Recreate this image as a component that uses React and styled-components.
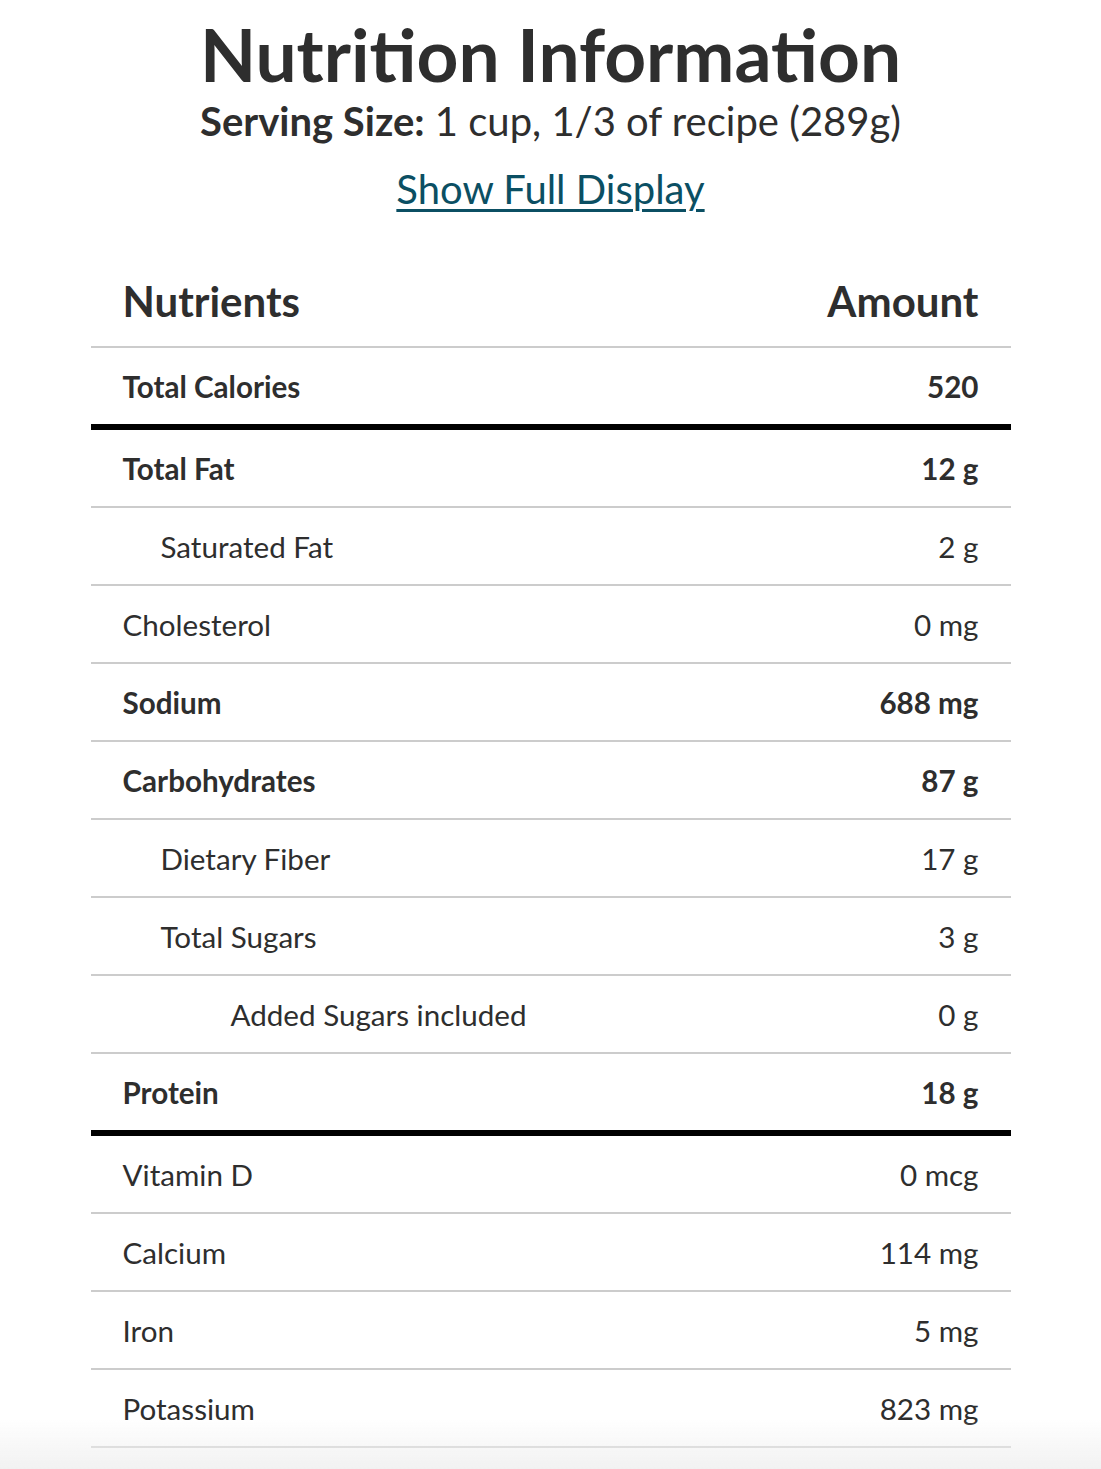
import React from 'react'
import styled, { createGlobalStyle } from 'styled-components'

const GlobalStyle = createGlobalStyle`
  body {
    margin: 0;
    background: #fff;
    font-family: Lato, "Noto Sans", sans-serif;
    color: #2e2e2e;
  }
`

const Page = styled.div`
  display: flex;
  flex-direction: column;
  align-items: center;
  padding-top: 18px;
`

const Title = styled.h1`
  margin: 0;
  font-size: 73px;
  line-height: 1;
  font-weight: 700;
  color: #2e2e2e;
`

const Serving = styled.p`
  margin: 6px 0 0;
  font-size: 40px;
  line-height: 1.2;
  font-weight: 400;

  strong {
    font-weight: 700;
  }
`

const FullLink = styled.a`
  margin-top: 20px;
  font-size: 40px;
  line-height: 1.2;
  color: #0b4f63;
  text-decoration: underline;
  text-decoration-thickness: 3px;
  text-underline-offset: 5px;
  cursor: pointer;
`

const Table = styled.div`
  width: 920px;
  margin-top: 63px;
  display: flex;
  flex-direction: column;
`

const HeadRow = styled.div`
  display: flex;
  justify-content: space-between;
  align-items: center;
  padding: 0 32px 20px;
  border-bottom: 2px solid #cccccc;
  font-size: 42px;
  font-weight: 700;
  line-height: 1.2;
`

const Row = styled.div`
  display: flex;
  justify-content: space-between;
  align-items: center;
  height: 76px;
  padding: 0 32px 0 ${p => 32 + p.$indent}px;
  border-bottom: ${p => (p.$heavy ? '6px solid #000' : '2px solid #cccccc')};
  font-size: 29.6px;
  font-weight: ${p => (p.$bold ? 700 : 400)};
  color: #2e2e2e;
`

const Fade = styled.div`
  position: fixed;
  left: 0;
  right: 0;
  bottom: 0;
  height: 50px;
  pointer-events: none;
  background: linear-gradient(to bottom, rgba(240, 240, 240, 0), rgba(240, 240, 240, 0.9));
`

const nutrients = [
  { name: 'Total Calories', amount: '520', bold: true, heavy: true },
  { name: 'Total Fat', amount: '12 g', bold: true },
  { name: 'Saturated Fat', amount: '2 g', indent: 38 },
  { name: 'Cholesterol', amount: '0 mg' },
  { name: 'Sodium', amount: '688 mg', bold: true },
  { name: 'Carbohydrates', amount: '87 g', bold: true },
  { name: 'Dietary Fiber', amount: '17 g', indent: 38 },
  { name: 'Total Sugars', amount: '3 g', indent: 38 },
  { name: 'Added Sugars included', amount: '0 g', indent: 108 },
  { name: 'Protein', amount: '18 g', bold: true, heavy: true },
  { name: 'Vitamin D', amount: '0 mcg' },
  { name: 'Calcium', amount: '114 mg' },
  { name: 'Iron', amount: '5 mg' },
  { name: 'Potassium', amount: '823 mg' },
]

const App = () => (
  <>
    <GlobalStyle />
    <Page>
      <Title>Nutrition Information</Title>
      <Serving>
        <strong>Serving Size:</strong> 1 cup, 1/3 of recipe (289g)
      </Serving>
      <FullLink>Show Full Display</FullLink>
      <Table>
        <HeadRow>
          <span>Nutrients</span>
          <span>Amount</span>
        </HeadRow>
        {nutrients.map(n => (
          <Row key={n.name} $bold={n.bold} $heavy={n.heavy} $indent={n.indent || 0}>
            <span>{n.name}</span>
            <span>{n.amount}</span>
          </Row>
        ))}
      </Table>
    </Page>
    <Fade />
  </>
)

export default App
